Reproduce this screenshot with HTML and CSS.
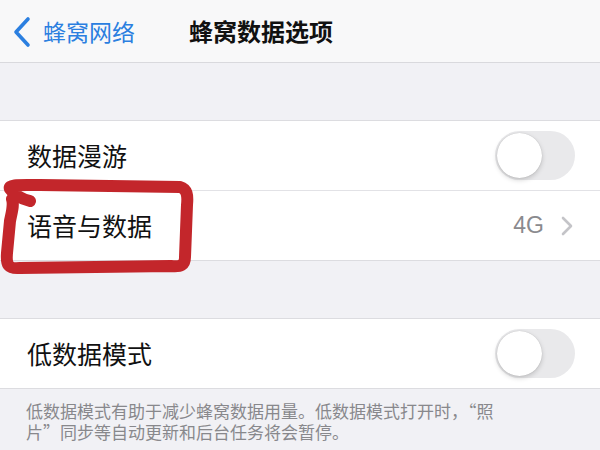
FILE: index.html
```html
<!DOCTYPE html>
<html lang="zh-CN">
<head>
<meta charset="utf-8">
<link rel="stylesheet" href="styles.css">
</head>
<body>
<div class="page">
  <header class="nav">
    <div class="back">
      <svg class="chev-back" width="20" height="32" viewBox="0 0 20 32"><path d="M16 3 L4 16 L16 29" fill="none" stroke="#2b7fe0" stroke-width="3.6" stroke-linecap="round" stroke-linejoin="round"/></svg>
      <span class="back-text">蜂窝网络</span>
    </div>
    <div class="title">蜂窝数据选项</div>
  </header>
  <div class="gap"></div>
  <section class="group">
    <div class="cell">
      <span class="label">数据漫游</span>
      <span class="toggle"><span class="knob"></span></span>
    </div>
    <div class="cell">
      <span class="label">语音与数据</span>
      <span class="detail">4G
        <svg class="chev" width="12" height="20" viewBox="0 0 12 20"><path d="M2 2 L10 10 L2 18" fill="none" stroke="#c4c4c8" stroke-width="2.6" stroke-linecap="round" stroke-linejoin="round"/></svg>
      </span>
    </div>
  </section>
  <div class="gap"></div>
  <section class="group">
    <div class="cell">
      <span class="label">低数据模式</span>
      <span class="toggle"><span class="knob"></span></span>
    </div>
  </section>
  <p class="footer">低数据模式有助于减少蜂窝数据用量。低数据模式打开时，“照片”同步等自动更新和后台任务将会暂停。</p>
  <svg class="marker" width="200" height="104" viewBox="0 0 200 104"><path d="M30 30 C22 28 14 24 10 18 C8 13 20 14 40 14 L180 16 C187 18 188 24 187 34 L185 86 C185 94 181 96 171 95 L20 97 C8 98 6 94 7 82 L10 50 C12 40 14 34 12 28" fill="none" stroke="#c3262b" stroke-width="12" stroke-linecap="round" stroke-linejoin="round"/></svg>
</div>
</body>
</html>
```
FILE: styles.css
```css
* { box-sizing: border-box; }
html, body { margin: 0; padding: 0; }
body {
  width: 600px;
  height: 450px;
  overflow: hidden;
  background: #f1f1f5;
  font-family: "Noto Sans CJK SC", "Noto Sans", sans-serif;
  color: #111;
}
.page { position: relative; }
.nav {
  height: 63px;
  background: #f8f8f9;
  border-bottom: 1px solid #d9d9dd;
  display: flex;
  align-items: center;
  padding-left: 12px;
}
.back { display: flex; align-items: center; gap: 11px; }
.chev-back { display: block; margin-top: 1px; }
.back-text { font-size: 23px; color: #2b7fe0; line-height: 1; }
.title { margin-left: 54px; font-size: 24px; font-weight: 700; line-height: 1; }
.gap { height: 57px; }
.group {
  background: #fff;
  border-top: 1px solid #dcdce0;
  border-bottom: 1px solid #dcdce0;
}
.cell {
  height: 69px;
  display: flex;
  align-items: center;
  justify-content: space-between;
  padding: 0 25px 0 27px;
}
.cell + .cell { border-top: 1px solid #e2e2e6; height: 70px; }
.label { font-size: 25px; line-height: 1; color: #111; }
.toggle {
  width: 80px;
  height: 49px;
  border-radius: 25px;
  background: #e9e9eb;
  padding: 2px;
  display: flex;
}
.knob {
  width: 45px;
  height: 45px;
  border-radius: 50%;
  background: #fff;
  box-shadow: 0 2px 5px rgba(0,0,0,0.18), 0 0 1px rgba(0,0,0,0.2);
}
.detail {
  display: flex;
  align-items: center;
  gap: 17px;
  font-family: "Liberation Sans", "Noto Sans", sans-serif;
  font-size: 23px;
  color: #8a8a8e;
  margin-right: 2px;
}
.chev { display: block; }
.footer {
  margin: 0;
  width: 506px;
  padding: 11px 0 0 26px;
  font-size: 17px;
  line-height: 21px;
  color: #88888c;
}
.marker {
  position: absolute;
  left: 0;
  top: 171px;
}
```
